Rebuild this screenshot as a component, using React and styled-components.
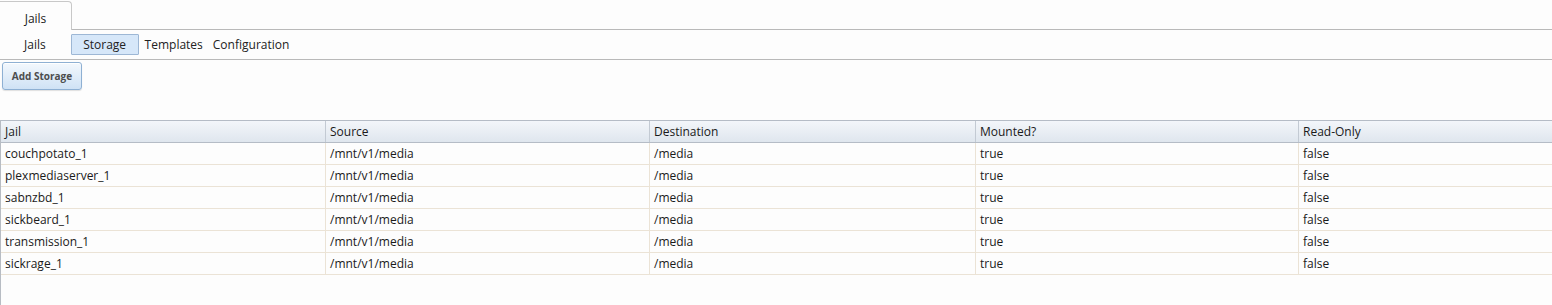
import React from "react";
import styled, { createGlobalStyle } from "styled-components";

const Global = createGlobalStyle`
  html, body { margin: 0; padding: 0; background: #fdfdfd; }
  body { font-family: "Open Sans", "Liberation Sans", sans-serif; font-size: 12px; color: #1a1a1a; }
`;

const Page = styled.div`
  width: 1552px;
  height: 305px;
  overflow: hidden;
  display: flex;
  flex-direction: column;
`;

const TabStrip = styled.div`
  height: 28px;
  padding-top: 1px;
  display: flex;
  align-items: stretch;
  border-bottom: 1px solid #b9b9b9;
`;

const Tab = styled.div`
  width: 72px;
  box-sizing: border-box;
  border: 1px solid #c8c8c8;
  border-left: none;
  border-bottom: none;
  border-top-right-radius: 4px;
  background: #fdfdfd;
  display: flex;
  align-items: center;
  justify-content: center;
  padding-top: 5px;
  margin-bottom: -1px;
  height: 29px;
`;

const SubNav = styled.div`
  height: 29px;
  display: flex;
  align-items: center;
  border-bottom: 1px solid #b9b9b9;
  padding-left: 23px;
`;

const SubItem = styled.div`
  box-sizing: border-box;
  height: 21px;
  display: flex;
  align-items: center;
  padding: 0 ${(p) => (p.$active ? "11.5px" : "0")};
  margin-right: ${(p) => (p.$active ? "5px" : "8px")};
  background: ${(p) => (p.$active ? "#d6e7f9" : "transparent")};
  border: 1px solid ${(p) => (p.$active ? "#9db7d5" : "transparent")};
  border-radius: 1px;
  color: #222;
  &:first-child { margin-right: 24px; }
`;

const Toolbar = styled.div`
  padding: 2px 0 0 2px;
  height: 60px;
  box-sizing: border-box;
`;

const Button = styled.div`
  display: inline-flex;
  align-items: center;
  justify-content: center;
  box-sizing: border-box;
  width: 80px;
  height: 28px;
  border: 1px solid #8eb0d3;
  border-radius: 3px;
  background: linear-gradient(#f3f8fd, #cfe2f5);
  box-shadow: inset 0 1px 0 #fff, 0 1px 1px rgba(0,0,0,0.12);
  font-size: 10px;
  font-weight: bold;
  color: #4d4d4d;
`;

const Grid = styled.div`
  border-left: 1px solid #b7bcc3;
  flex: 1;
  display: flex;
  flex-direction: column;
`;

const Row = styled.div`
  display: grid;
  grid-template-columns: 324px 324px 326px 323px 1fr;
  height: 22px;
  box-sizing: border-box;
  border-bottom: 1px solid ${(p) => (p.$head ? "#b5bcc6" : "#ebe3d6")};
  ${(p) =>
    p.$head
      ? `border-top: 1px solid #b5bcc6; background: linear-gradient(#f3f6fa, #dfe6ee); height: 23px;`
      : `background: #fdfdfd;`}
`;

const Cell = styled.div`
  display: flex;
  align-items: center;
  padding-left: 4px;
  white-space: nowrap;
  border-left: 1px solid ${(p) => (p.$head ? "#c3cad3" : "#ebe3d6")};
  &:first-child { border-left: none; }
`;

const cols = ["Jail", "Source", "Destination", "Mounted?", "Read-Only"];
const jails = ["couchpotato_1", "plexmediaserver_1", "sabnzbd_1", "sickbeard_1", "transmission_1", "sickrage_1"];

export default function App() {
  return (
    <Page>
      <Global />
      <TabStrip>
        <Tab>Jails</Tab>
      </TabStrip>
      <SubNav>
        <SubItem>Jails</SubItem>
        <SubItem $active>Storage</SubItem>
        <SubItem>Templates</SubItem>
        <SubItem>Configuration</SubItem>
      </SubNav>
      <Toolbar>
        <Button>Add Storage</Button>
      </Toolbar>
      <Grid>
        <Row $head>
          {cols.map((c) => (
            <Cell $head key={c}>{c}</Cell>
          ))}
        </Row>
        {jails.map((j) => (
          <Row key={j}>
            <Cell>{j}</Cell>
            <Cell>/mnt/v1/media</Cell>
            <Cell>/media</Cell>
            <Cell>true</Cell>
            <Cell>false</Cell>
          </Row>
        ))}
      </Grid>
    </Page>
  );
}
